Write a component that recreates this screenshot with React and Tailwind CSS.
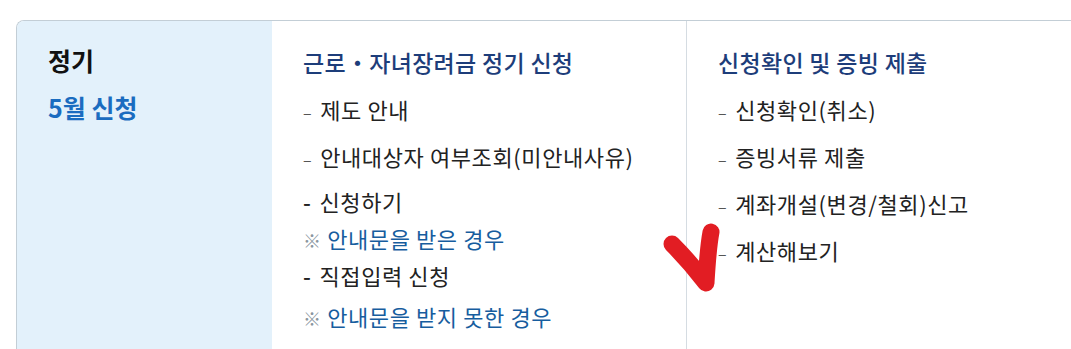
function Dash({ bold = false }) {
  return bold ? (
    <span className="mr-[8px] font-medium leading-none">-</span>
  ) : (
    <span className="mr-[8px] text-[16px] leading-none text-[#555]">–</span>
  );
}

function Note({ children, last = false }) {
  return (
    <p className={last ? "mt-[11px] text-[#175d9e]" : "mt-[7px] text-[#175d9e]"}>
      <span className="text-[#8a96a0] text-[18px] leading-none">※</span> {children}
    </p>
  );
}

export default function App() {
  return (
    <div
      className="relative w-[1071px] h-[349px] overflow-hidden bg-white pt-[20px] pl-[16px]"
      style={{ fontFamily: '"Noto Sans CJK KR", "Noto Sans", sans-serif' }}
    >
      <div className="flex h-[360px] w-[1080px] border-t border-l border-[#c3ced6] rounded-tl-[8px] overflow-hidden">
        <div className="w-[255px] shrink-0 bg-[#e3f1fb] pl-[31px] pt-[24px]">
          <p className="text-[25px] leading-[30px] font-bold text-[#111]">정기</p>
          <p className="mt-[17px] text-[25px] leading-[30px] font-bold text-[#1a6cc0]">5월 신청</p>
        </div>

        <div className="w-[415px] shrink-0 border-r border-[#d5dce2] pl-[31px] pt-[26px] text-[22px] leading-[30px] tracking-[0.6px] text-[#222]">
          <p className="text-[23px] tracking-[0.3px] font-medium text-[#1d3d7a]">근로・자녀장려금 정기 신청</p>
          <p className="mt-[17px]"><Dash />제도 안내</p>
          <p className="mt-[17px]"><Dash />안내대상자 여부조회(미안내사유)</p>
          <p className="mt-[15px]"><Dash bold />신청하기</p>
          <Note>안내문을 받은 경우</Note>
          <p className="mt-[7px]"><Dash bold />직접입력 신청</p>
          <Note last>안내문을 받지 못한 경우</Note>
        </div>

        <div className="flex-1 pl-[31px] pt-[26px] text-[22px] leading-[30px] tracking-[0.6px] text-[#222]">
          <p className="text-[23px] tracking-[0.3px] font-medium text-[#1d3d7a]">신청확인 및 증빙 제출</p>
          <p className="mt-[17px]"><Dash />신청확인(취소)</p>
          <p className="mt-[17px]"><Dash />증빙서류 제출</p>
          <p className="mt-[17px]"><Dash />계좌개설(변경/철회)신고</p>
          <p className="mt-[17px]"><Dash />계산해보기</p>
        </div>
      </div>

      <svg className="absolute left-0 top-0" width="1071" height="349" viewBox="0 0 1071 349">
        <path
          d="M672 244 C 684 256, 696 270, 706 283 C 707 266, 708 248, 711 232"
          fill="none"
          stroke="#e21d23"
          strokeWidth="17"
          strokeLinecap="round"
          strokeLinejoin="round"
        />
      </svg>
    </div>
  );
}
